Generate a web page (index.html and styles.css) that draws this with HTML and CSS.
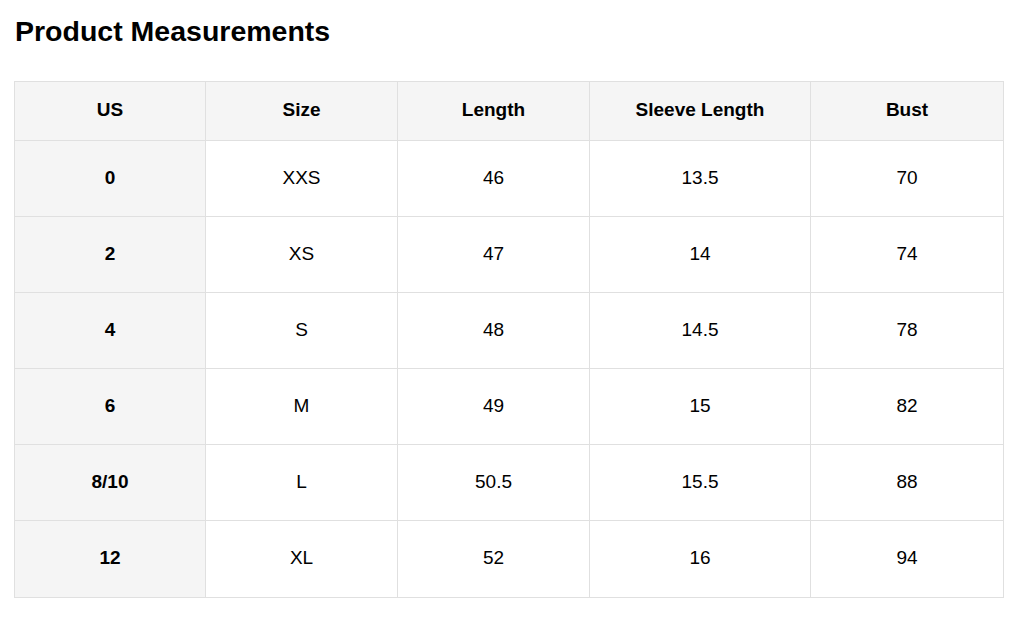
FILE: index.html
```html
<!DOCTYPE html>
<html>
<head>
<meta charset="utf-8">
<link rel="stylesheet" href="styles.css">
</head>
<body>
<h1 class="title">Product Measurements</h1>
<table class="chart">
<colgroup>
<col class="c1"><col class="c2"><col class="c3"><col class="c4"><col class="c5">
</colgroup>
<thead>
<tr><th>US</th><th>Size</th><th>Length</th><th>Sleeve Length</th><th>Bust</th></tr>
</thead>
<tbody>
<tr><th>0</th><td>XXS</td><td>46</td><td>13.5</td><td>70</td></tr>
<tr><th>2</th><td>XS</td><td>47</td><td>14</td><td>74</td></tr>
<tr><th>4</th><td>S</td><td>48</td><td>14.5</td><td>78</td></tr>
<tr><th>6</th><td>M</td><td>49</td><td>15</td><td>82</td></tr>
<tr><th>8/10</th><td>L</td><td>50.5</td><td>15.5</td><td>88</td></tr>
<tr><th>12</th><td>XL</td><td>52</td><td>16</td><td>94</td></tr>
</tbody>
</table>
</body>
</html>
```
FILE: styles.css
```css
html, body { margin: 0; padding: 0; background: #fff; }
body {
  padding: 16px 20px 0 14px;
  font-family: "Liberation Sans", Arial, sans-serif;
  color: #000;
}
.title {
  margin: 0 0 0 1px;
  font-size: 28.5px;
  line-height: 30px;
  font-weight: bold;
}
.chart {
  margin-top: 35px;
  width: 989px;
  border-collapse: collapse;
  table-layout: fixed;
  font-size: 19px;
}
.c1 { width: 191px; }
.c2 { width: 192px; }
.c3 { width: 192px; }
.c4 { width: 221px; }
.c5 { width: 193px; }
.chart th, .chart td {
  border: 1px solid #e0e0e0;
  text-align: center;
  padding: 0 0 2px 0;
}
.chart thead th {
  height: 56px;
  background: #f5f5f5;
  font-weight: bold;
}
.chart tbody th, .chart tbody td { height: 73px; }
.chart tbody tr:last-child th, .chart tbody tr:last-child td { height: 74px; }
.chart tbody th { background: #f5f5f5; font-weight: bold; }
.chart tbody td { font-weight: normal; }
```
